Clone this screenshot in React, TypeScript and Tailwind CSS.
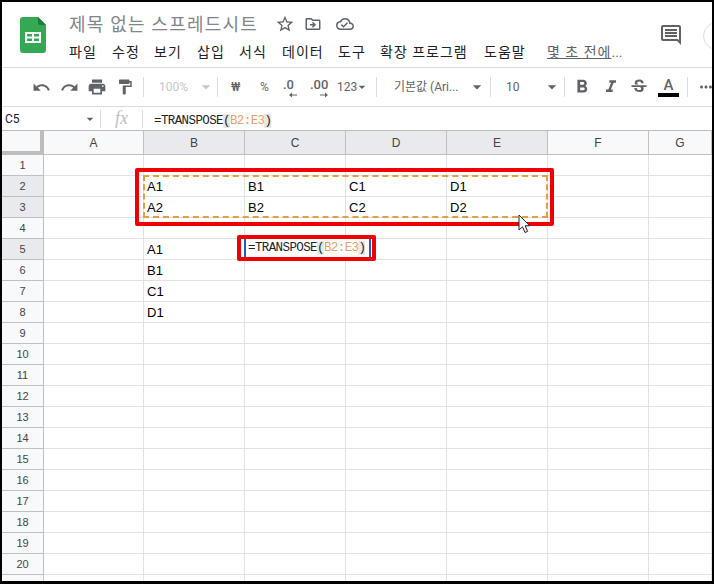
import {
  MdUndo,
  MdRedo,
  MdPrint,
  MdFormatPaint,
  MdFormatBold,
  MdFormatItalic,
  MdStrikethroughS,
  MdStarBorder,
  MdOutlineDriveFileMove,
  MdOutlineCloudDone,
  MdOutlineComment,
  MdArrowDropDown,
  MdMoreHoriz,
} from 'react-icons/md';

const kr = "font-['Roboto','Noto_Sans_CJK_KR',sans-serif]";
const menus: [string, string][] = [
  ['파일', 'w-[43px]'],
  ['수정', 'w-[42px]'],
  ['보기', 'w-[43px]'],
  ['삽입', 'w-[42px]'],
  ['서식', 'w-[43px]'],
  ['데이터', 'w-[56px]'],
  ['도구', 'w-[42px]'],
  ['확장 프로그램', 'w-[104px]'],
  ['도움말', 'w-[63px]'],
];
const cols = ['A', 'B', 'C', 'D', 'E', 'F', 'G'];
const rows = Array.from({ length: 21 }, (_, i) => i + 1);
const cellText: Record<string, string> = {
  B2: 'A1', C2: 'B1', D2: 'C1', E2: 'D1',
  B3: 'A2', C3: 'B2', D3: 'C2', E3: 'D2',
  B5: 'A1', B6: 'B1', B7: 'C1', B8: 'D1',
};

function Sep() {
  return <div className="w-px h-5 shrink-0 bg-[#dadce0]" />;
}

function Formula() {
  return (
    <span className="font-['Liberation_Mono',monospace] text-[12.5px] tracking-[-0.6px] text-[#222] whitespace-pre">
      =TRANSPOSE<span className="bg-[#e8e8e8]">(</span>
      <span className="text-[#e8a06c]">B2:E3</span>
      <span className="bg-[#e8e8e8]">)</span>
    </span>
  );
}

// decimal place buttons: digits with a tiny arrow under them
function Decimal({ label, dir, className }: { label: string; dir: 'left' | 'right'; className: string }) {
  return (
    <div className={`relative shrink-0 h-[24px] pt-[3px] text-[13px] leading-[14px] font-medium ${className}`}>
      {label}
      <svg className="absolute right-0 top-[17px]" width="8" height="6" viewBox="0 0 8 6">
        {dir === 'left' ? (
          <path d="M8 2.5H3V0.5L0 3l3 2.5V3.5h5z" fill="#5f6368" />
        ) : (
          <path d="M0 2.5h5V0.5L8 3 5 5.5V3.5H0z" fill="#5f6368" />
        )}
      </svg>
    </div>
  );
}

export default function App() {
  return (
    <div className={`relative w-[714px] h-[584px] overflow-hidden bg-white border-black border-t-2 border-l-2 border-r-2 border-b-[3px] ${kr}`}>
      {/* Title + menu */}
      <div className="flex h-[66px] border-b border-[#dadce0]">
        <div className="w-[65px] pl-[18px] pt-[15px]">
          <svg width="26" height="36" viewBox="0 0 26 36">
            <path d="M3 0h15l8 8v25a3 3 0 0 1-3 3H3a3 3 0 0 1-3-3V3a3 3 0 0 1 3-3z" fill="#34a853" />
            <path d="M18 0l8 8h-6a2 2 0 0 1-2-2z" fill="#188038" />
            <path d="M5 15h16v11H5z M7 17v2.5h5V17z M14 17v2.5h5V17z M7 21.5V24h5v-2.5z M14 21.5V24h5v-2.5z" fill="#fff" fillRule="evenodd" />
          </svg>
        </div>
        <div className="flex-1 flex flex-col pl-[2px]">
          <div className="flex items-center h-[30px] pt-[14px]">
            <span className="text-[18px] text-[#80868b] w-[206px] tracking-[1.2px] whitespace-nowrap">제목 없는 스프레드시트</span>
            <MdStarBorder className="text-[#5f6368] w-5 h-5" />
            <MdOutlineDriveFileMove className="text-[#5f6368] w-[18px] h-[18px] ml-[9px]" />
            <MdOutlineCloudDone className="text-[#5f6368] w-[18px] h-[18px] ml-[14px]" />
          </div>
          <div className="flex items-center mt-[10px] text-[14px] tracking-[1px] text-[#202124]">
            {menus.map(([m, w]) => (
              <span key={m} className={`${w} whitespace-nowrap`}>{m}</span>
            ))}
            <span className="text-[#5f6368] whitespace-nowrap">
              <span className="underline">몇 초 전에</span>
              <span className="tracking-normal">...</span>
            </span>
          </div>
        </div>
        <div className="w-[47px] relative">
          <MdOutlineComment className="absolute left-[-6px] top-[21px] w-6 h-6 text-[#5f6368]" />
          <div className="absolute left-[38px] top-[20px] w-7 h-7 rounded-full border border-[#dadce0]" />
        </div>
      </div>

      {/* Toolbar */}
      <div className="flex items-center h-[39px] overflow-hidden border-b border-[#dadce0] pl-[30px] text-[#5f6368]">
        <MdUndo className="shrink-0 w-[19px] h-[19px]" />
        <MdRedo className="shrink-0 w-[19px] h-[19px] ml-[9px]" />
        <MdPrint className="shrink-0 w-[20px] h-[20px] ml-[8px]" />
        <MdFormatPaint className="shrink-0 w-[18px] h-[18px] ml-[9px]" />
        <div className="ml-[9px]"><Sep /></div>
        <span className="shrink-0 text-[12px] text-[#c4c6c9] w-[28px] ml-[15px]">100%</span>
        <MdArrowDropDown className="shrink-0 w-5 h-5 text-[#c4c6c9] ml-[9px]" />
        <div className="ml-[1px]"><Sep /></div>
        <span className="shrink-0 text-[12px] w-[10px] ml-[13px] font-medium">₩</span>
        <span className="shrink-0 text-[12px] w-[9px] ml-[19px]">%</span>
        <Decimal label=".0" dir="left" className="w-[14px] ml-[14px]" />
        <Decimal label=".00" dir="right" className="w-[18px] ml-[13px]" />
        <span className="shrink-0 text-[12px] w-[21px] ml-[9px]">123</span>
        <MdArrowDropDown className="shrink-0 w-4 h-4 -ml-[4px]" />
        <div className="ml-[6px]"><Sep /></div>
        <span className="shrink-0 text-[12px] ml-[17px] w-[66px] whitespace-nowrap">기본값 (Ari...</span>
        <MdArrowDropDown className="shrink-0 w-5 h-5 ml-[7px]" />
        <div className="ml-[3px]"><Sep /></div>
        <span className="shrink-0 text-[12px] ml-[15px] w-[14px]">10</span>
        <MdArrowDropDown className="shrink-0 w-5 h-5 ml-[22px]" />
        <div className="ml-[2px]"><Sep /></div>
        <MdFormatBold className="shrink-0 w-[22px] h-[22px] ml-[6px]" />
        <MdFormatItalic className="shrink-0 w-[20px] h-[20px] ml-[8px]" />
        <MdStrikethroughS className="shrink-0 w-[20px] h-[20px] ml-[8px]" />
        <div className="shrink-0 flex flex-col items-center w-[21px] ml-[9px]">
          <span className="text-[15px] leading-[16px] font-medium">A</span>
          <div className="w-[21px] h-1 bg-black" />
        </div>
        <div className="ml-[8px]"><Sep /></div>
        <MdMoreHoriz className="shrink-0 w-[18px] h-[18px] ml-[9px]" />
      </div>

      {/* Formula bar */}
      <div className="flex items-center h-[24px] border-b border-[#bdbdbd]">
        <span className="w-[82px] pl-[3px] text-[12px] text-[#202124]">C5</span>
        <MdArrowDropDown className="w-4 h-4 text-[#5f6368] -ml-[2px]" />
        <div className="ml-[2px] w-px h-[18px] bg-[#dadce0]" />
        <span className="w-[41px] text-center font-['Liberation_Serif',serif] italic text-[18px] text-[#c0c0c0]">fx</span>
        <div className="w-px h-[18px] bg-[#dadce0]" />
        <div className="ml-[11px]"><Formula /></div>
      </div>

      {/* Grid */}
      <div className="grid grid-cols-[42px_100px_repeat(5,101px)_1fr] grid-rows-[24px] auto-rows-[21px] text-[13px] font-['Liberation_Sans',sans-serif]">
        <div className="bg-[#f8f9fa] border-r-4 border-b-4 border-[#bdbdbd]" />
        {cols.map((c) => (
          <div
            key={c}
            className={`flex items-center justify-center text-[12px] text-[#444] border-r border-b border-[#c0c0c0] ${'BCDE'.includes(c) ? 'bg-[#e8eaed]' : 'bg-[#f8f9fa]'}`}
          >
            {c}
          </div>
        ))}
        {rows.map((r) => (
          <div key={r} className="contents">
            <div className={`flex items-center justify-center text-[11px] text-[#444] border-r border-b border-[#c0c0c0] ${[2, 3, 5].includes(r) ? 'bg-[#e8eaed]' : 'bg-[#f8f9fa]'}`}>
              {r}
            </div>
            {cols.map((c) => (
              <div key={c} className="flex items-center pl-[3px] pt-[1px] text-[#000] border-r border-b border-[#e2e2e2]">
                {cellText[`${c}${r}`]}
              </div>
            ))}
          </div>
        ))}
      </div>

      {/* Active cell editor */}
      <div className="absolute left-[242px] top-[237px] w-[127px] h-[18px] bg-white border-x-2 border-[#1a5fc8] flex items-center pl-[2px] pt-[1px]">
        <Formula />
      </div>

      {/* Copied range */}
      <div className="absolute left-[141px] top-[173px] w-[405px] h-[43px] border-2 border-dashed border-[#e0a040]" />

      {/* Red annotation boxes */}
      <div className="absolute left-[133px] top-[166px] w-[419px] h-[58px] border-4 border-[#f00000] rounded-[2px]" />
      <div className="absolute left-[235px] top-[233px] w-[139px] h-[26px] border-4 border-[#f00000] rounded-[2px]" />

      {/* Mouse pointer */}
      <svg className="absolute left-[516px] top-[212px]" width="13" height="20" viewBox="0 0 13 20">
        <path d="M1 1v15l3.5-3.2 2.5 5.7 2.6-1.1-2.5-5.6h4.6z" fill="#fff" stroke="#222" strokeWidth="1" />
      </svg>
    </div>
  );
}
